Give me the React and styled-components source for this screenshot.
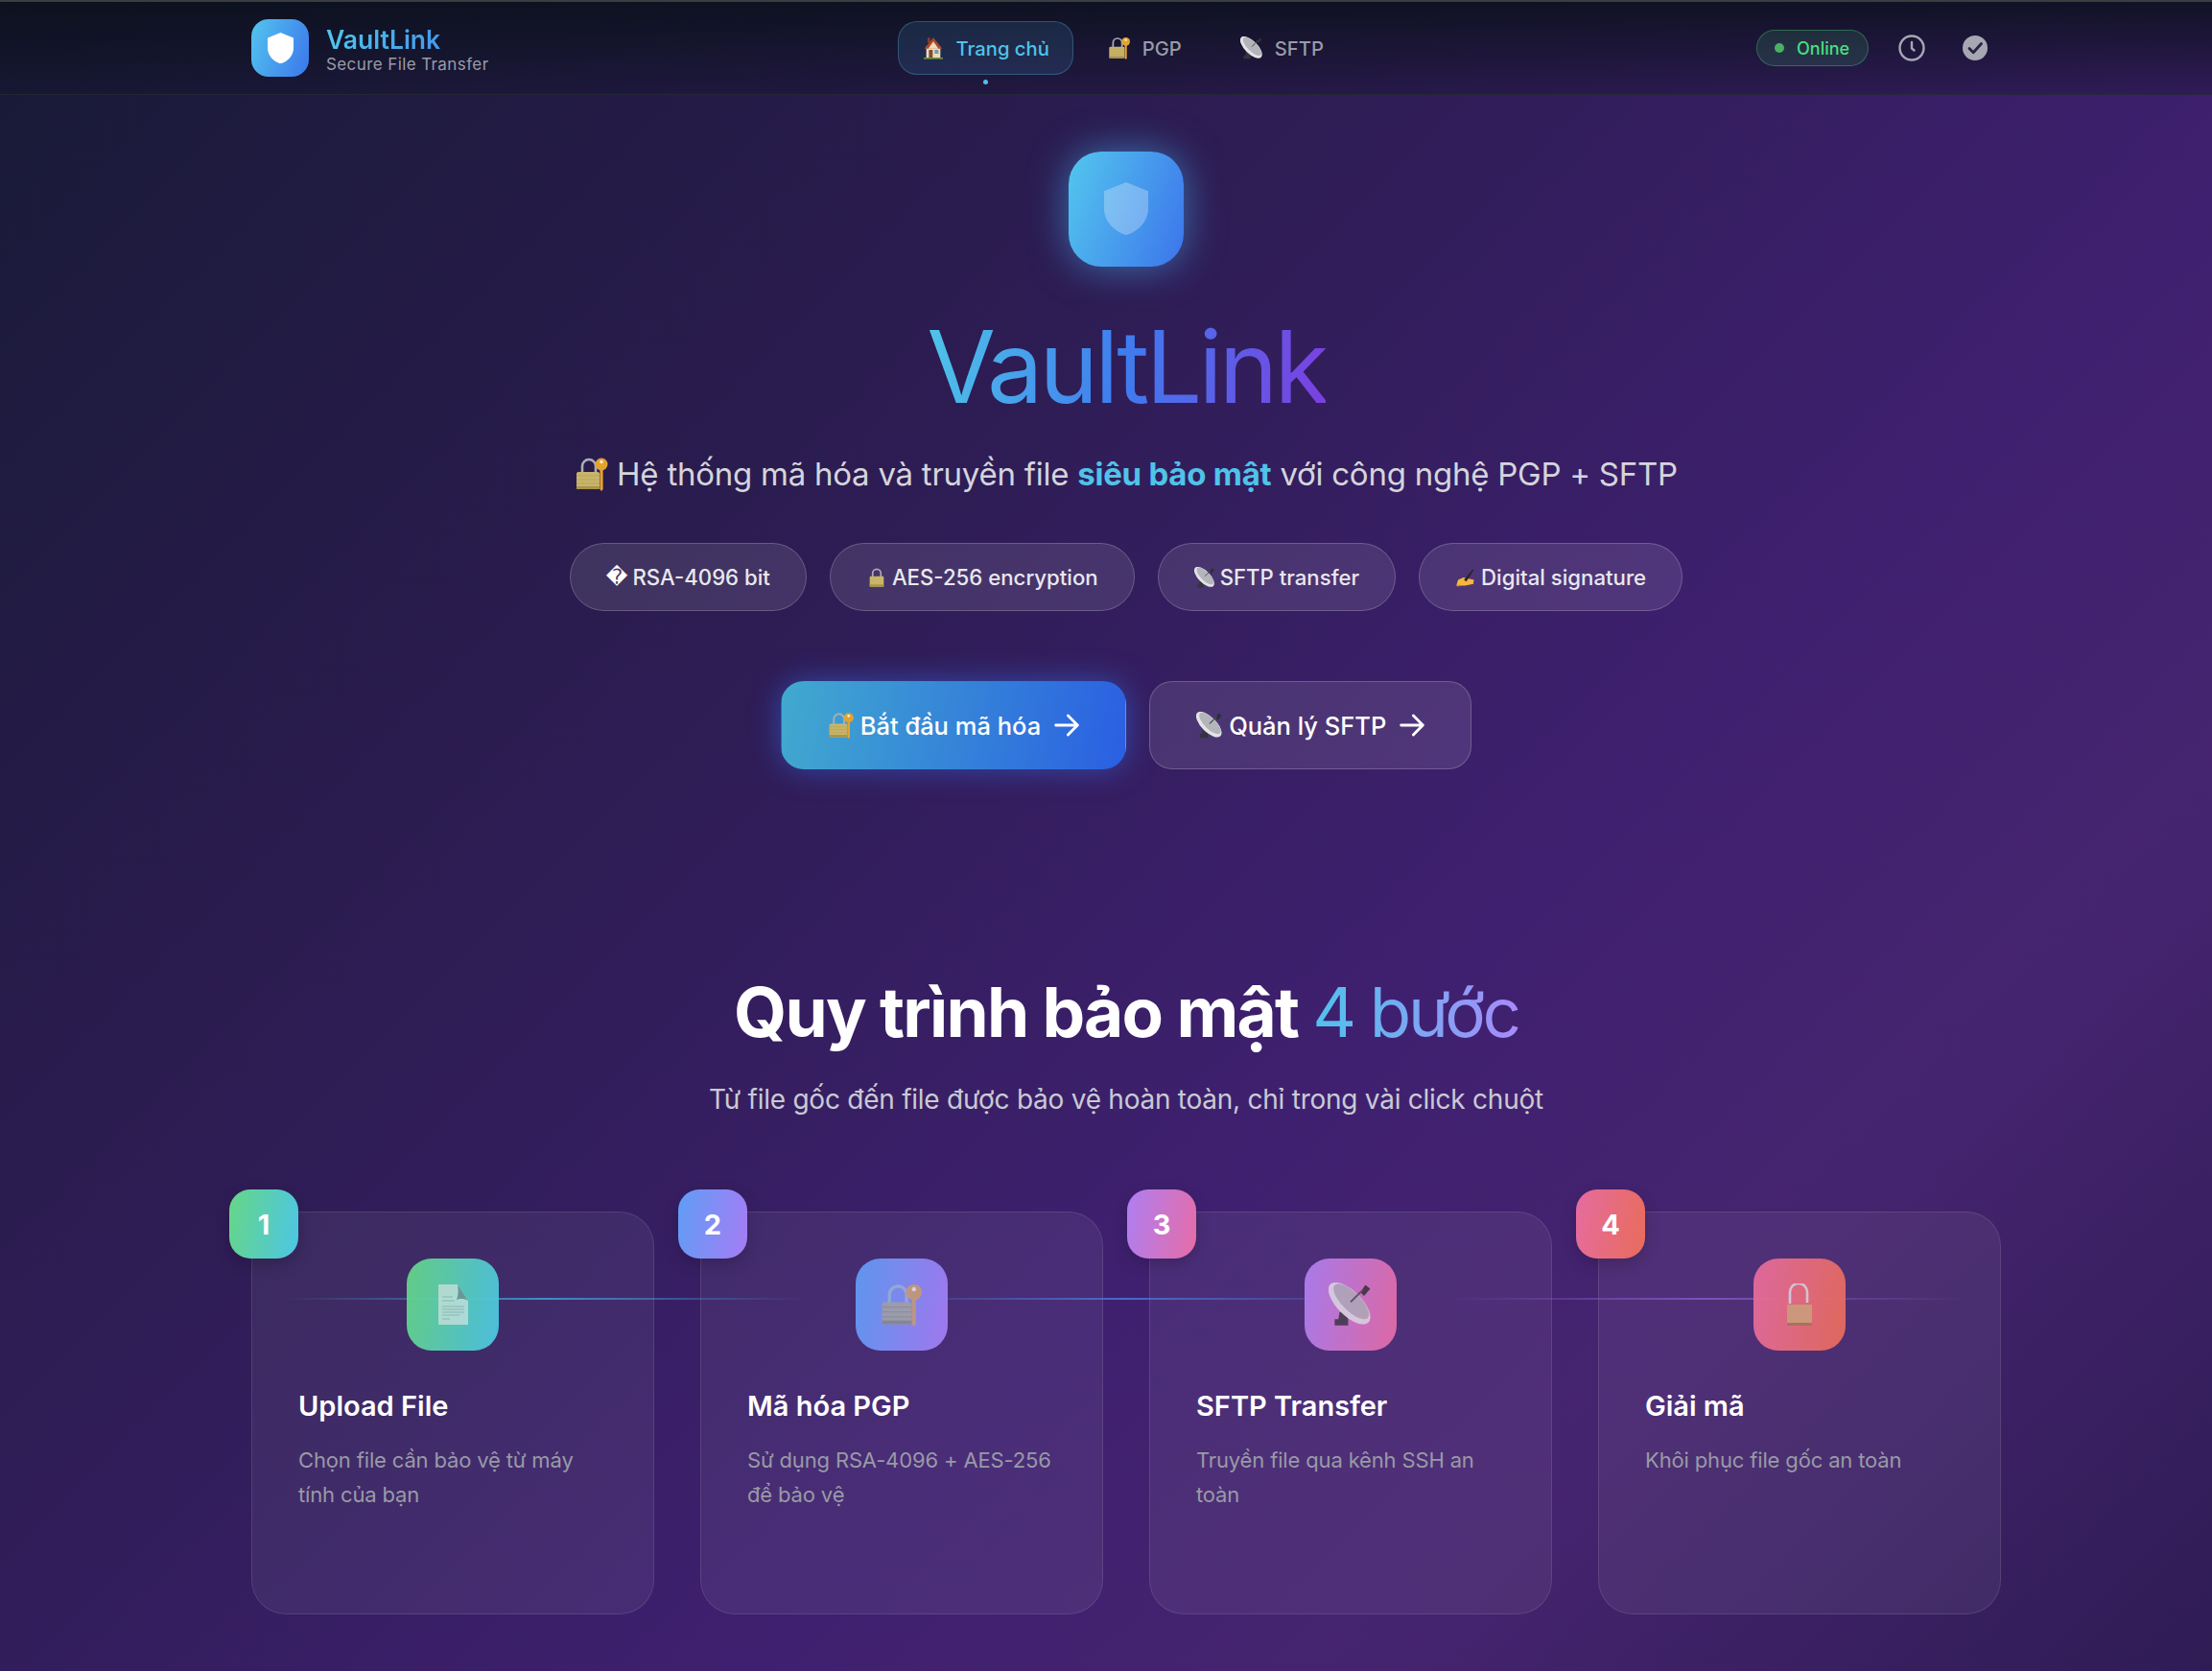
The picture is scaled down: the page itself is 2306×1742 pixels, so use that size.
import React from 'react'
import styled, { createGlobalStyle } from 'styled-components'

const GlobalStyle = createGlobalStyle`
  * { box-sizing: border-box; }
  html, body { margin: 0; padding: 0; }
  body {
    font-family: Inter, "Noto Sans", "Liberation Sans", sans-serif;
    background: #1c1a3a;
    color: #fff;
  }
`

const Page = styled.div`
  min-height: 1742px;
  overflow: hidden;
  border-top: 2px solid #3b3d40;
  background: linear-gradient(135deg, #181a36 0%, #2b1c50 32%, #3f2070 62%, #45246f 78%, #2f1c55 100%);
`
const Header = styled.header`
  height: 97px;
  padding: 0 222px 0 262px;
  display: flex;
  align-items: center;
  justify-content: space-between;
  border-bottom: 1px solid rgba(255, 255, 255, 0.09);
  background: linear-gradient(180deg, rgba(10, 16, 26, 0.85) 0%, rgba(18, 16, 40, 0.3) 100%);
`
const Brand = styled.div`
  display: flex;
  align-items: center;
  gap: 18px;
`
const LogoBox = styled.div`
  width: 60px;
  height: 60px;
  border-radius: 18px;
  display: flex;
  align-items: center;
  justify-content: center;
  background: linear-gradient(110deg, #53c5ee, #3b76ec);
`
const BrandText = styled.div`
  display: flex;
  flex-direction: column;
  padding-top: 4px;
`
const BrandName = styled.div`
  font-size: 26.5px;
  line-height: 30px;
  font-weight: 600;
  background: linear-gradient(90deg, #4fc6ee, #3f86ec);
  -webkit-background-clip: text;
  background-clip: text;
  color: transparent;
`
const BrandSub = styled.div`
  font-size: 17px;
  line-height: 22px;
  letter-spacing: 0.4px;
  color: #9a9ba8;
`
const Nav = styled.nav`
  display: flex;
  gap: 11px;
`
const NavItem = styled.div`
  position: relative;
  height: 56px;
  padding: 0 24px;
  display: flex;
  align-items: center;
  gap: 12px;
  border-radius: 20px;
  font-size: 20.2px;
  font-weight: 500;
  color: ${(p) => (p.$active ? '#4fc3e8' : '#9a9ba8')};
  border: 1px solid ${(p) => (p.$active ? 'rgba(79,195,232,0.3)' : 'transparent')};
  background: ${(p) => (p.$active ? 'rgba(79,170,232,0.14)' : 'transparent')};
`
const NavDot = styled.span`
  position: absolute;
  left: 50%;
  bottom: -11px;
  width: 5px;
  height: 5px;
  margin-left: -2.5px;
  border-radius: 50%;
  background: #4fc3e8;
`
const Status = styled.div`
  display: flex;
  align-items: center;
  gap: 16px;
`
const OnlinePill = styled.div`
  height: 38px;
  width: 117px;
  margin-right: 4px;
  padding-left: 18px;
  display: flex;
  align-items: center;
  gap: 13px;
  border-radius: 19px;
  font-size: 18px;
  font-weight: 500;
  color: #4ade80;
  border: 1px solid rgba(74, 222, 128, 0.35);
  background: rgba(74, 222, 128, 0.13);
`
const OnlineDot = styled.span`
  width: 10px;
  height: 10px;
  border-radius: 50%;
  background: #4caf64;
`
const IconButton = styled.div`
  width: 50px;
  height: 50px;
  display: flex;
  align-items: center;
  justify-content: center;
  color: #a6a7b3;
`

const Content = styled.main`
  width: 1824px;
  margin-left: 262px;
`
const Hero = styled.section`
  padding-top: 59px;
  display: flex;
  flex-direction: column;
  align-items: center;
`
const HeroIcon = styled.div`
  width: 120px;
  height: 120px;
  border-radius: 34px;
  display: flex;
  align-items: center;
  justify-content: center;
  background: linear-gradient(110deg, #53c7ee, #3c74ec);
  box-shadow: 0 0 40px rgba(70, 170, 240, 0.6);
`
const Title = styled.h1`
  margin: 52px 0 0;
  font-size: 104px;
  line-height: 104px;
  font-weight: 400;
  letter-spacing: -3.8px;
  background: linear-gradient(100deg, #4fc6e8 0%, #3f7bee 50%, #7c3fe0 100%);
  -webkit-background-clip: text;
  background-clip: text;
  color: transparent;
`
const Lead = styled.p`
  margin: 35px 0 0;
  font-size: 33px;
  line-height: 50px;
  letter-spacing: -0.25px;
  color: #d4d5dc;
  display: flex;
  align-items: center;
  gap: 8px;
  white-space: pre;
`
const Strong = styled.strong`
  font-weight: 700;
  color: #4fc3e8;
`
const Chips = styled.div`
  margin-top: 47px;
  display: flex;
  gap: 24px;
`
const Chip = styled.div`
  height: 71px;
  padding: 0 37px;
  display: flex;
  align-items: center;
  gap: 5px;
  border-radius: 36px;
  font-size: 22.2px;
  font-weight: 500;
  color: #e8e8ee;
  border: 1px solid rgba(255, 255, 255, 0.2);
  background: rgba(255, 255, 255, 0.1);
`
const Actions = styled.div`
  margin-top: 73px;
  display: flex;
  gap: 24px;
`
const ActionButton = styled.div`
  height: 92px;
  padding: 0 44px 0 48px;
  display: flex;
  align-items: center;
  gap: 6px;
  border-radius: 24px;
  font-size: 25.5px;
  font-weight: 500;
  color: #fff;
  border: 1px solid ${(p) => (p.$primary ? 'transparent' : 'rgba(255,255,255,0.2)')};
  background: ${(p) => (p.$primary ? 'linear-gradient(100deg, #41aacf, #2a5fe2)' : 'rgba(255,255,255,0.1)')};
  box-shadow: ${(p) => (p.$primary ? '0 0 30px rgba(50,110,235,0.55)' : 'none')};
`
const ArrowWrap = styled.span`
  margin-left: 4px;
  display: flex;
`

const Steps = styled.section`
  padding-top: 213px;
  text-align: center;
`
const StepsTitle = styled.h2`
  margin: 0;
  font-size: 71px;
  line-height: 80px;
  font-weight: 700;
  letter-spacing: -1.75px;
  color: #fff;
`
const StepsAccent = styled.span`
  font-weight: 400;
  letter-spacing: -3.2px;
  background: linear-gradient(90deg, #4fc3ec, #a78bfa);
  -webkit-background-clip: text;
  background-clip: text;
  color: transparent;
`
const StepsLead = styled.p`
  margin: 29px 0 0;
  font-size: 28px;
  line-height: 44px;
  letter-spacing: -0.25px;
  color: #c9cad3;
`
const Grid = styled.div`
  position: relative;
  margin-top: 95px;
  display: grid;
  grid-template-columns: repeat(4, 420px);
  gap: 48px;
  text-align: left;
`
const Card = styled.div`
  position: relative;
  height: 420px;
  padding: 48px 48px 0;
  border-radius: 36px;
  border: 1px solid rgba(255, 255, 255, 0.1);
  background: rgba(255, 255, 255, 0.06);
`
const Badge = styled.div`
  position: absolute;
  top: -24px;
  left: -24px;
  width: 72px;
  height: 72px;
  border-radius: 22px;
  display: flex;
  align-items: center;
  justify-content: center;
  font-size: 29px;
  font-weight: 700;
  background: ${(p) => p.$bg};
  box-shadow: 0 6px 16px rgba(0, 0, 0, 0.18);
`
const StepIcon = styled.div`
  position: relative;
  z-index: 2;
  width: 96px;
  height: 96px;
  margin: 0 auto;
  border-radius: 26px;
  display: flex;
  align-items: center;
  justify-content: center;
  background: ${(p) => p.$bg};
  opacity: 0.94;
`
const StepName = styled.h3`
  margin: 38px 0 0;
  font-size: 29px;
  line-height: 40px;
  font-weight: 600;
  color: #fff;
`
const StepText = styled.p`
  margin: 18px 0 0;
  font-size: 22px;
  line-height: 36px;
  letter-spacing: -0.15px;
  color: #999aa6;
`
const Flow = styled.span`
  position: absolute;
  z-index: 1;
  top: 90px;
  left: ${(p) => p.$left}px;
  width: 546px;
  height: 2px;
  opacity: 0.85;
  background: linear-gradient(90deg, transparent, ${(p) => p.$color}, transparent);
`

const Shield = ({ size, fill }) => (
  <svg width={size} height={size * 1.2} viewBox="0 0 40 48">
    <path d="M20 0 L40 8 V24 C40 36 30 45 20 48 C10 45 0 36 0 24 V8 Z" fill={fill} />
  </svg>
)

const Arrow = () => (
  <svg width="34" height="34" viewBox="0 0 24 24" fill="none" stroke="#fff" strokeWidth="2" strokeLinecap="round" strokeLinejoin="round">
    <path d="M4 12h16M13 5l7 7-7 7" />
  </svg>
)

const Clock = () => (
  <svg width="30" height="30" viewBox="0 0 30 30" fill="none" stroke="currentColor" strokeWidth="2.4" strokeLinecap="round">
    <circle cx="15" cy="15" r="12.5" />
    <path d="M15 9v6.5l2.5 2" />
  </svg>
)

const CheckBadge = () => (
  <svg width="28" height="28" viewBox="0 0 28 28">
    <circle cx="14" cy="14" r="13" fill="currentColor" />
    <path d="M8 14.5l4.2 4.2L20.5 9.5" fill="none" stroke="#2a2140" strokeWidth="2.8" strokeLinecap="round" strokeLinejoin="round" />
  </svg>
)

// emoji are drawn because the sandbox has no colour emoji font
const LockKey = ({ size = 24, muted }) => (
  <svg width={size} height={size} viewBox="0 0 36 36" style={{ opacity: muted ? 0.82 : 1, flex: 'none' }}>
    <path d="M8 17V10a7 7 0 0 1 14 0v7" fill="none" stroke={muted ? '#9fb6d8' : '#a9adb5'} strokeWidth="2.6" />
    <rect x="2" y="16" width="24" height="18" rx="2" fill={muted ? '#a9a9a0' : '#c9b56a'} />
    <path d="M2 20h24M2 24h24M2 28h24" stroke={muted ? '#96968e' : '#b8a45c'} strokeWidth="1" />
    <rect x="2" y="31" width="24" height="3" fill={muted ? '#8c8c84' : '#a8934d'} />
    <circle cx="28" cy="8" r="6.5" fill={muted ? '#d3a268' : '#e3a32f'} />
    <circle cx="28" cy="5.5" r="1.8" fill="#fff" opacity="0.8" />
    <path d="M26.4 13h3.2v21l-1.6 2-1.6-2z" fill={muted ? '#d3a268' : '#e3a32f'} />
  </svg>
)

const House = ({ size = 24 }) => (
  <svg width={size} height={size} viewBox="0 0 36 36" style={{ flex: 'none' }}>
    <rect x="9" y="2" width="4" height="8" fill="#8c3a28" />
    <rect x="7" y="15" width="22" height="19" fill="#efdcb6" />
    <path d="M18 2 L32 19 H4 Z" fill="#a8482f" />
    <path d="M18 8 L26 19 H10 Z" fill="#efdcb6" />
    <rect x="11" y="21" width="6" height="13" fill="#7a5136" />
    <rect x="20" y="21" width="6" height="6" fill="#6b9cc0" />
    <rect x="3" y="33" width="30" height="2.4" fill="#6f9448" />
  </svg>
)

const Dish = ({ size = 24, muted }) => (
  <svg width={size} height={size} viewBox="0 0 36 36" style={{ opacity: muted ? 0.82 : 1, flex: 'none' }}>
    <path d="M26 8l4-6 4 3-5 6z" fill="#2e2c33" />
    <path d="M9 24l-1 6H5v5h11v-5l-2-6z" fill="#35333b" />
    <ellipse cx="17" cy="17" rx="22" ry="10" transform="rotate(45 17 17)" fill="#e4e4e8" />
    <ellipse cx="18.5" cy="15.5" rx="19" ry="7.5" transform="rotate(45 18.5 15.5)" fill="#b4b4bb" />
    <path d="M18 16L28 6" stroke="#4b4952" strokeWidth="1.5" />
  </svg>
)

const Doc = ({ size = 44 }) => (
  <svg width={size} height={size} viewBox="0 0 36 44" style={{ opacity: 0.72, flex: 'none' }}>
    <path d="M3 1h20l11 17v25H3z" fill="#dceee8" />
    <path d="M23 1l11 17c-5-3-9-2-12-1 2-5 2-11 1-16z" fill="#6f8f8c" />
    <path d="M7 14h11M7 18h13M7 24h23M7 27h23M7 30h23M7 33h18M7 37h8" stroke="#9dbdb8" strokeWidth="1" />
  </svg>
)

const PlainLock = ({ size = 22 }) => (
  <svg width={size} height={size} viewBox="0 0 36 36" style={{ flex: 'none' }}>
    <path d="M11 18V11a7 7 0 0 1 14 0v7" fill="none" stroke="#a9adb5" strokeWidth="2.8" />
    <rect x="6" y="16" width="24" height="18" rx="2" fill="#c9b56a" />
    <rect x="6" y="30" width="24" height="4" fill="#a8934d" />
  </svg>
)

const OpenLock = ({ size = 44 }) => (
  <svg width={size} height={size} viewBox="0 0 36 44" style={{ opacity: 0.9, flex: 'none' }}>
    <path d="M8 21V9a9 9 0 0 1 18 0v11" fill="none" stroke="#d8d8e4" strokeWidth="2.6" />
    <rect x="5" y="22" width="26" height="22" rx="1" fill="#d2a47c" />
    <rect x="5" y="41" width="26" height="3" fill="#a87a56" />
  </svg>
)

const WritingHand = ({ size = 22 }) => (
  <svg width={size} height={size} viewBox="0 0 36 36" style={{ flex: 'none' }}>
    <path d="M2 32l3-10 9-4 9 2 9 2-1 7-14 3z" fill="#f6b73c" />
    <path d="M15 22L30 4l2 1-13 20z" fill="#26232c" />
    <path d="M2 32l5 2-1-5z" fill="#e09a28" />
  </svg>
)

const DiamondText = styled.span`
  font-family: "DejaVu Sans", sans-serif;
  font-size: 22px;
  color: #fff;
`

const navLinks = [
  { label: 'Trang chủ', icon: <House />, active: true },
  { label: 'PGP', icon: <LockKey /> },
  { label: 'SFTP', icon: <Dish /> },
]

const chips = [
  { label: 'RSA-4096 bit', icon: <DiamondText>{'\uFFFD'}</DiamondText> },
  { label: 'AES-256 encryption', icon: <PlainLock /> },
  { label: 'SFTP transfer', icon: <Dish size={22} /> },
  { label: 'Digital signature', icon: <WritingHand /> },
]

const steps = [
  { n: 1, name: 'Upload File', text: 'Chọn file cần bảo vệ từ máy tính của bạn', bg: 'linear-gradient(100deg, #66d686, #4cc6e6)', icon: <Doc /> },
  { n: 2, name: 'Mã hóa PGP', text: 'Sử dụng RSA-4096 + AES-256 để bảo vệ', bg: 'linear-gradient(100deg, #5f9df5, #a67cf5)', icon: <LockKey size={46} muted /> },
  { n: 3, name: 'SFTP Transfer', text: 'Truyền file qua kênh SSH an toàn', bg: 'linear-gradient(100deg, #ae7ff2, #e66ca6)', icon: <Dish size={46} muted /> },
  { n: 4, name: 'Giải mã', text: 'Khôi phục file gốc an toàn', bg: 'linear-gradient(100deg, #e56ca0, #e86c5a)', icon: <OpenLock /> },
]

const flows = [
  { left: 31, color: '#3fa0d8' },
  { left: 638, color: '#4a78d8' },
  { left: 1245, color: '#8458c8' },
]

export default function App() {
  return (
    <Page>
      <GlobalStyle />
      <Header>
        <Brand>
          <LogoBox>
            <Shield size={27} fill="#fff" />
          </LogoBox>
          <BrandText>
            <BrandName>VaultLink</BrandName>
            <BrandSub>Secure File Transfer</BrandSub>
          </BrandText>
        </Brand>
        <Nav>
          {navLinks.map((link) => (
            <NavItem key={link.label} $active={link.active}>
              {link.icon}
              {link.label}
              {link.active && <NavDot />}
            </NavItem>
          ))}
        </Nav>
        <Status>
          <OnlinePill>
            <OnlineDot />
            Online
          </OnlinePill>
          <IconButton>
            <Clock />
          </IconButton>
          <IconButton>
            <CheckBadge />
          </IconButton>
        </Status>
      </Header>

      <Content>
        <Hero>
          <HeroIcon>
            <Shield size={46} fill="rgba(255,255,255,0.28)" />
          </HeroIcon>
          <Title>VaultLink</Title>
          <Lead>
            <LockKey size={36} />
            <span>
              Hệ thống mã hóa và truyền file <Strong>siêu bảo mật</Strong> với công nghệ PGP + SFTP
            </span>
          </Lead>
          <Chips>
            {chips.map((chip) => (
              <Chip key={chip.label}>
                {chip.icon}
                {chip.label}
              </Chip>
            ))}
          </Chips>
          <Actions>
            <ActionButton $primary>
              <LockKey size={28} />
              Bắt đầu mã hóa
              <ArrowWrap>
                <Arrow />
              </ArrowWrap>
            </ActionButton>
            <ActionButton>
              <Dish size={28} />
              Quản lý SFTP
              <ArrowWrap>
                <Arrow />
              </ArrowWrap>
            </ActionButton>
          </Actions>
        </Hero>

        <Steps>
          <StepsTitle>
            Quy trình bảo mật <StepsAccent>4 bước</StepsAccent>
          </StepsTitle>
          <StepsLead>Từ file gốc đến file được bảo vệ hoàn toàn, chỉ trong vài click chuột</StepsLead>
          <Grid>
            {steps.map((step) => (
              <Card key={step.n}>
                <Badge $bg={step.bg}>{step.n}</Badge>
                <StepIcon $bg={step.bg}>{step.icon}</StepIcon>
                <StepName>{step.name}</StepName>
                <StepText>{step.text}</StepText>
              </Card>
            ))}
            {flows.map((flow) => (
              <Flow key={flow.left} $left={flow.left} $color={flow.color} />
            ))}
          </Grid>
        </Steps>
      </Content>
    </Page>
  )
}
